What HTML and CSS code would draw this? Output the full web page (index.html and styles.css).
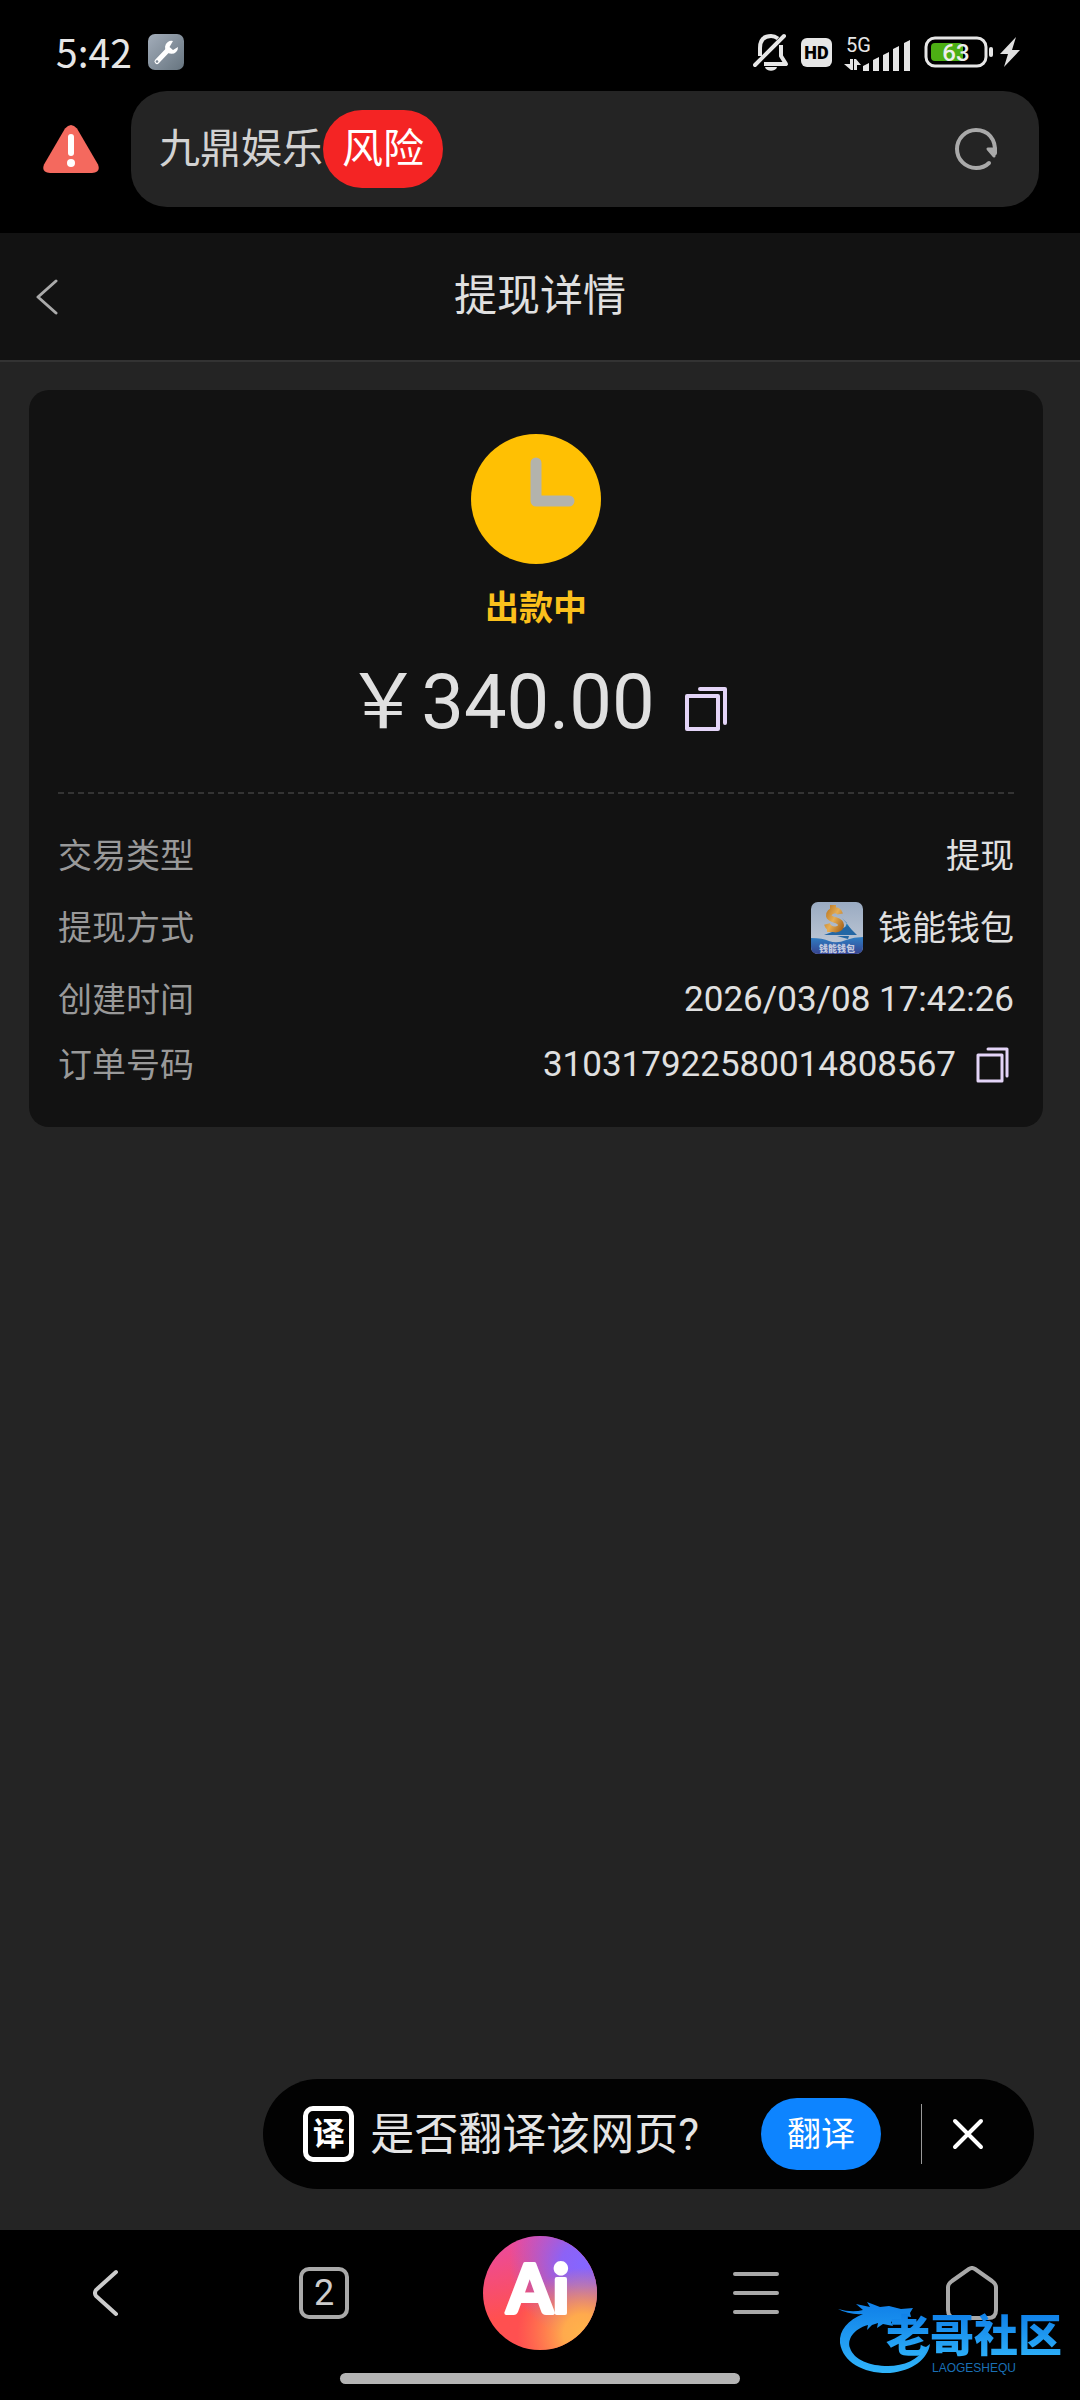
FILE: index.html
```html
<!DOCTYPE html>
<html lang="zh-CN">
<head>
    <meta charset="UTF-8">
    <meta name="viewport" content="width=device-width, initial-scale=1.0">
    <title>提现详情</title>
    <link rel="stylesheet" href="styles.css">
</head>
<body>
    <div class="status-bar">
        <div class="status-left">
            <span class="clock">5:42</span>
            <svg class="tool-icon" width="36" height="36" viewBox="0 0 36 36">
                <defs>
                    <linearGradient id="tool" x1="0" y1="0" x2="1" y2="1">
                        <stop offset="0" stop-color="#a3adba"/>
                        <stop offset="1" stop-color="#66747f"/>
                    </linearGradient>
                </defs>
                <rect width="36" height="36" rx="7" fill="url(#tool)"/>
                <path d="M9 27.500L19 17" stroke="#fff" stroke-width="5" stroke-linecap="round"/>
                <path d="M25 7a6.500 6.500 0 1 0 5 6l-5 3-3.500-3z" fill="#fff"/>
                <circle cx="9" cy="27.500" r="1.300" fill="#7d8996"/>
            </svg>
        </div>
        <div class="status-right">
            <svg width="36" height="38" viewBox="0 0 36 38" fill="none" stroke="#e6e6e6" stroke-width="4">
                <path d="M2 32L31 3" stroke-linecap="round"/>
                <path d="M7 23V15C7 7 11 3 18 3c3 0 5 1 7 2.500"/>
                <path d="M28 12v11l5 8H11" stroke-linejoin="round"/>
                <path d="M12 34h12c-1 5-11 5-12 0z" fill="#e6e6e6" stroke="none"/>
            </svg>
            <span class="hd">HD</span>
            <svg class="signal" width="68" height="38" viewBox="0 -4 68 38" fill="#e6e6e6">
                <text x="2" y="15" class="net">5G</text>
                <path d="M6 22h3v11H7l-7-6h6zM10 33V22h2l5 6h-4v5z"/>
                <path d="M19 29l6-3v8h-6zM29 23l6-3v14h-6zM39 18l6-3v19h-6zM49 12l6-3v25h-6zM60 6l6-3v31h-6z"/>
            </svg>
            <svg class="battery" width="96" height="32" viewBox="0 0 96 32">
                <rect x="2" y="2" width="60" height="28" rx="9" fill="none" stroke="#e6e6e6" stroke-width="3"/>
                <rect x="7" y="7" width="32" height="18" rx="4" fill="#4caf14"/>
                <rect x="65" y="11" width="4" height="10" rx="2" fill="#e6e6e6"/>
                <text x="32" y="25" class="level">63</text>
                <path d="M92 1L76 18h8L80 31l16-17h-8z" fill="#e0e0e0"/>
            </svg>
        </div>
    </div>

    <header class="browser-bar">
        <svg class="warning" width="56" height="48" viewBox="0 0 56 48">
            <path d="M22 3.500q6-7 12 0l21 36q3 8-6 8.500H7q-9-.5-6-8.500z" fill="#f4695e"/>
            <path d="M28 12v16" stroke="#fff" stroke-width="6" stroke-linecap="round"/>
            <circle cx="28" cy="38" r="4" fill="#fff"/>
        </svg>
        <div class="address">
            <span>九鼎娱乐</span>
            <span class="risk">风险</span>
            <button class="reload" aria-label="刷新">
                <svg width="44" height="44" viewBox="0 0 44 44" fill="none" stroke="#a9a9a9" stroke-width="4" stroke-linecap="round">
                    <path d="M41 26C42 12 34 3 22 3A19 19 0 0 0 22 41q8 0 13-5"/>
                    <path d="M34 22h7l-1 7z" fill="#a9a9a9" stroke-width="3" stroke-linejoin="round"/>
                </svg>
            </button>
        </div>
    </header>

    <div class="page-header">
        <a class="back" href="#" aria-label="返回">
            <svg width="22" height="36" viewBox="0 0 22 36" fill="none" stroke="#aaa" stroke-width="3" stroke-linecap="round" stroke-linejoin="round"><path d="M20 2L2 18l18 16"/></svg>
        </a>
        <h1>提现详情</h1>
    </div>

    <main class="content">
        <section class="card">
            <svg class="pending" width="130" height="130" viewBox="0 0 130 130">
                <circle cx="65" cy="65" r="65" fill="#ffc003"/>
                <path d="M65 29v38h33" fill="none" stroke="#b3b3ac" stroke-width="11" stroke-linecap="round" stroke-linejoin="round"/>
            </svg>
            <p class="state">出款中</p>
            <div class="amount">
                <span class="money">￥340.00</span>
                <button aria-label="复制金额">
                    <svg width="42" height="44" viewBox="0 0 42 44" fill="none" stroke="#e3d4f7" stroke-width="4" stroke-linejoin="round" stroke-linecap="round">
                        <rect x="2" y="9" width="31" height="33"/>
                        <path d="M15 2h25v34" stroke-width="4"/>
                    </svg>
                </button>
            </div>
            <dl class="details">
                <div class="row">
                    <dt>交易类型</dt>
                    <dd>提现</dd>
                </div>
                <div class="row">
                    <dt>提现方式</dt>
                    <dd class="wallet">
                        <svg width="52" height="52" viewBox="0 0 52 52">
                            <defs>
                                <linearGradient id="sky" x1="0" y1="0" x2="0" y2="1">
                                    <stop offset="0" stop-color="#9aabc2"/>
                                    <stop offset="1" stop-color="#c4ccd8"/>
                                </linearGradient>
                                <linearGradient id="sea" x1="0" y1="0" x2="0" y2="1">
                                    <stop offset="0" stop-color="#2f7fc4"/>
                                    <stop offset="1" stop-color="#36438f"/>
                                </linearGradient>
                                <linearGradient id="gold" x1="0" y1="0" x2="1" y2="1">
                                    <stop offset="0" stop-color="#b87420"/>
                                    <stop offset=".5" stop-color="#e6ae55"/>
                                    <stop offset="1" stop-color="#a9661c"/>
                                </linearGradient>
                            </defs>
                            <rect width="52" height="52" rx="7" fill="url(#sky)"/>
                            <path d="M31 16l5 5-4 9-18 3h30l-7-10z" fill="#1e7ab6"/>
                            <path d="M13 33l24-9 9 9zM26 34h12l-1 3z" fill="#2467a4"/>
                            <path d="M29 12c-1-6-12-4-11 2 1 5 12 3 12 9 0 6-12 6-14-1M22 3v6M19 24v6" fill="none" stroke="url(#gold)" stroke-width="6"/>
                            <path d="M0 36q12 0 18 3 8 3 17-1 8-3 17-3v10q0 7-7 7H7q-7 0-7-7z" fill="url(#sea)"/>
                            <text x="26" y="50" class="wallet-name">钱能钱包</text>
                        </svg>
                        <span>钱能钱包</span>
                    </dd>
                </div>
                <div class="row">
                    <dt>创建时间</dt>
                    <dd class="number">2026/03/08 17:42:26</dd>
                </div>
                <div class="row">
                    <dt>订单号码</dt>
                    <dd class="order number">
                        <span>310317922580014808567</span>
                        <button aria-label="复制订单号码">
                            <svg width="34" height="36" viewBox="0 0 34 36" fill="none" stroke="#e3d4f7" stroke-width="3" stroke-linejoin="round" stroke-linecap="round">
                                <rect x="2" y="8" width="24" height="26"/>
                                <path d="M12 2h19v27"/>
                            </svg>
                        </button>
                    </dd>
                </div>
            </dl>
        </section>

        <div class="translate">
            <span class="translate-icon">译</span>
            <span class="question">是否翻译该网页?</span>
            <button class="translate-btn">翻译</button>
            <button class="close" aria-label="关闭">
                <svg width="32" height="32" viewBox="0 0 32 32" stroke="#fff" stroke-width="4" stroke-linecap="round"><path d="M3 3l26 26M29 3L3 29"/></svg>
            </button>
        </div>
    </main>

    <footer class="bottom">
        <nav class="tabs">
            <a href="#" aria-label="后退">
                <svg width="30" height="52" viewBox="0 0 30 52" fill="none" stroke="#ccc" stroke-width="4" stroke-linecap="round"><path d="M23 5L3 23q-2 3 0 6l20 18"/></svg>
            </a>
            <a href="#" class="windows">2</a>
            <a href="#" class="ai" aria-label="Ai">
                <svg width="114" height="114" viewBox="0 0 114 114">
                    <defs>
                        <linearGradient id="ai-base" x1=".1" y1="0" x2=".3" y2="1">
                            <stop offset="0" stop-color="#e94aa5"/>
                            <stop offset=".7" stop-color="#ff5050"/>
                        </linearGradient>
                        <radialGradient id="ai-violet" cx=".88" cy=".25" r=".65">
                            <stop offset="0" stop-color="#8566ff"/>
                            <stop offset=".3" stop-color="#8d62f5"/>
                            <stop offset="1" stop-color="#8d62f5" stop-opacity="0"/>
                        </radialGradient>
                        <radialGradient id="ai-orange" cx=".88" cy=".86" r=".58">
                            <stop offset="0" stop-color="#ffb44a"/>
                            <stop offset=".3" stop-color="#ffaa4d"/>
                            <stop offset="1" stop-color="#ff8a4d" stop-opacity="0"/>
                        </radialGradient>
                    </defs>
                    <circle cx="57" cy="57" r="57" fill="url(#ai-base)"/>
                    <circle cx="57" cy="57" r="57" fill="url(#ai-violet)"/>
                    <circle cx="57" cy="57" r="57" fill="url(#ai-orange)"/>
                    <text x="55" y="77" class="ai-text">Ai</text>
                </svg>
            </a>
            <a href="#" aria-label="菜单">
                <svg width="50" height="52" viewBox="0 0 50 52" stroke="#a9a9a9" stroke-width="4" stroke-linecap="round"><path d="M4 7h42M4 26h42M4 45h42"/></svg>
            </a>
            <a href="#" aria-label="主页">
                <svg width="52" height="54" viewBox="0 0 52 54" fill="none" stroke="#a9a9a9" stroke-width="4" stroke-linejoin="round"><path d="M23 3q3-2 6 0l17 12q4 3 4 6v23q0 8-8 8H10q-8 0-8-8V21q0-3 4-6z"/></svg>
            </a>
        </nav>
        <div class="home-indicator"></div>
        <div class="watermark">
            <svg width="92" height="74" viewBox="0 0 92 74">
                <defs>
                    <linearGradient id="dragon" x1="0" y1="0" x2="0" y2="1">
                        <stop offset="0" stop-color="#0f7fe8"/>
                        <stop offset="1" stop-color="#30b4fa"/>
                    </linearGradient>
                </defs>
                <path d="M0 9q14 4 25 1l-7-6 14 3-3-5 13 5 9-1 12 3 12-1-3 5 1 4-9-1 4 5-11-1-4 2 2 4-10-2-6 4 1-5-6 2-5 5 1-5C15 29 9 40 12 48c4 12 20 18 38 18 16 0 30-6 38-19l4-3c-2 15-18 27-40 29C27 74 5 63 2 43 1 30 10 20 25 14Q11 15 0 9z" fill="url(#dragon)"/>
            </svg>
            <span class="watermark-name">老哥社区</span>
            <span class="watermark-latin">LAOGESHEQU</span>
        </div>
    </footer>
</body>
</html>
```

FILE: styles.css
```css
* {
    box-sizing: border-box;
}
body {
    margin: 0;
    min-height: 100vh;
    display: flex;
    flex-direction: column;
    background-color: #000;
    color: #e0e0e0;
    font-family: Roboto, "Noto Sans CJK SC", sans-serif;
    font-size: 34px;
    line-height: 38px;
}
svg {
    display: block;
    flex-shrink: 0;
}
button {
    padding: 0;
    border: 0;
    background: none;
    color: inherit;
    font: inherit;
    cursor: pointer;
}
a {
    color: inherit;
    text-decoration: none;
}

/* status bar */
.status-bar {
    height: 91px;
    padding: 13px 60px 0 56px;
    display: flex;
    justify-content: space-between;
    align-items: center;
}
.status-left,
.status-right {
    display: flex;
    align-items: center;
}
.status-left {
    gap: 16px;
}
.status-right {
    gap: 12px;
}
.clock {
    padding-bottom: 2px;
    font-family: "Noto Sans CJK SC", sans-serif;
    font-size: 39px;
    color: #e6e6e6;
}
.hd {
    width: 31px;
    height: 29px;
    border-radius: 6px;
    background-color: #e6e6e6;
    color: #000;
    font-size: 18px;
    font-weight: 900;
    line-height: 29px;
    text-align: center;
}
.net {
    font-size: 20px;
}
.level {
    font-size: 24px;
    font-weight: 500;
    fill: #eee;
    text-anchor: middle;
}

/* address bar */
.browser-bar {
    padding: 0 41px 26px 43px;
    display: flex;
    align-items: center;
    gap: 32px;
}
.address {
    flex: 1;
    height: 116px;
    padding: 0 41px 0 28px;
    display: flex;
    align-items: center;
    border-radius: 36px;
    background-color: #242424;
    color: #d2d2d2;
    font-size: 41px;
}
.risk {
    padding: 0 19px;
    border-radius: 39px;
    background-color: #f42424;
    color: #fff;
    line-height: 78px;
}
.reload {
    margin-left: auto;
}

/* page title */
.page-header {
    height: 129px;
    padding: 0 36px;
    display: grid;
    grid-template-columns: 22px 1fr 22px;
    align-items: center;
    background-color: #121212;
    border-bottom: 2px solid #333;
}
.page-header h1 {
    margin: 0;
    padding-bottom: 2px;
    font-size: 43px;
    font-weight: 400;
    line-height: 60px;
    text-align: center;
}

/* card */
.content {
    flex: 1;
    padding: 28px 37px 41px 29px;
    display: flex;
    flex-direction: column;
    background-color: #242424;
}
.card {
    padding: 44px 29px 43px;
    border-radius: 20px;
    background-color: #121212;
}
.pending {
    margin: 0 auto;
}
.state {
    margin: 22px 0 32px;
    color: #fbc01c;
    font-size: 34px;
    font-weight: 700;
    line-height: 44px;
    text-align: center;
}
.amount {
    display: flex;
    justify-content: center;
    align-items: center;
    gap: 30px;
    line-height: 80px;
}
.money {
    font-size: 76px;
}
.amount button {
    padding-top: 14px;
}
.details {
    margin: 50px 0 0;
    padding-top: 43px;
    display: flex;
    flex-direction: column;
    gap: 27px;
    border-top: 2px dashed #333;
}
.row {
    display: flex;
    justify-content: space-between;
    align-items: center;
}
.row dt {
    color: #999;
}
.row dd {
    margin: 0;
}
.row .number {
    font-size: 35px;
}
.wallet,
.order {
    display: flex;
    align-items: center;
}
.wallet {
    gap: 15px;
}
.order {
    gap: 20px;
    padding-right: 4px;
}
.wallet-name {
    font-family: "Noto Sans CJK SC", sans-serif;
    font-size: 9px;
    font-weight: 900;
    fill: #c4cbe0;
    text-anchor: middle;
}

/* translate prompt */
.translate {
    height: 110px;
    margin-top: auto;
    margin-right: 9px;
    padding: 0 50px 0 40px;
    display: flex;
    align-items: center;
    align-self: flex-end;
    border-radius: 55px;
    background-color: #020202;
}
.translate-icon {
    width: 51px;
    height: 56px;
    border: 5px solid #fff;
    border-radius: 10px;
    color: #fff;
    font-size: 32px;
    font-weight: 700;
    line-height: 46px;
    text-align: center;
}
.question {
    margin: 0 62px 0 16px;
    padding-top: 2px;
    font-size: 44px;
    color: #e4e4e4;
}
.translate-btn {
    padding: 0 26px;
    border-radius: 36px;
    background-color: #0d84ff;
    color: #fff;
    line-height: 72px;
}
.close {
    height: 60px;
    margin-left: 40px;
    padding-left: 30px;
    border-left: 1px solid #999;
}

/* bottom navigation */
.bottom {
    position: relative;
    padding: 6px 0 16px;
}
.tabs {
    display: grid;
    grid-template-columns: repeat(5, 1fr);
    justify-items: center;
    align-items: center;
}
.windows {
    width: 50px;
    height: 52px;
    border: 4px solid #a9a9a9;
    border-radius: 10px;
    color: #ccc;
    font-size: 36px;
    line-height: 44px;
    text-align: center;
}
.ai-text {
    font-family: Lato, sans-serif;
    font-size: 66px;
    font-weight: 700;
    fill: #fff;
    stroke: #fff;
    stroke-width: 4px;
    stroke-linejoin: round;
    text-anchor: middle;
}
.home-indicator {
    width: 37%;
    height: 11px;
    margin: 23px auto 0;
    border-radius: 6px;
    background-color: #b4b4b4;
}
.watermark {
    position: absolute;
    right: 18px;
    bottom: 26px;
    display: grid;
    grid-template-columns: 48px auto;
    grid-template-rows: 62px 12px;
    align-items: end;
}
.watermark svg {
    grid-row: 1 / 3;
}
.watermark-name {
    background: linear-gradient(#0f7fe8, #30b4fa);
    background-clip: text;
    color: transparent;
    font-size: 44px;
    font-weight: 900;
    line-height: 50px;
}
.watermark-latin {
    grid-column: 2;
    justify-self: center;
    color: #1a6fb5;
    font-family: "Liberation Sans", sans-serif;
    font-size: 12px;
    line-height: 12px;
}
```
